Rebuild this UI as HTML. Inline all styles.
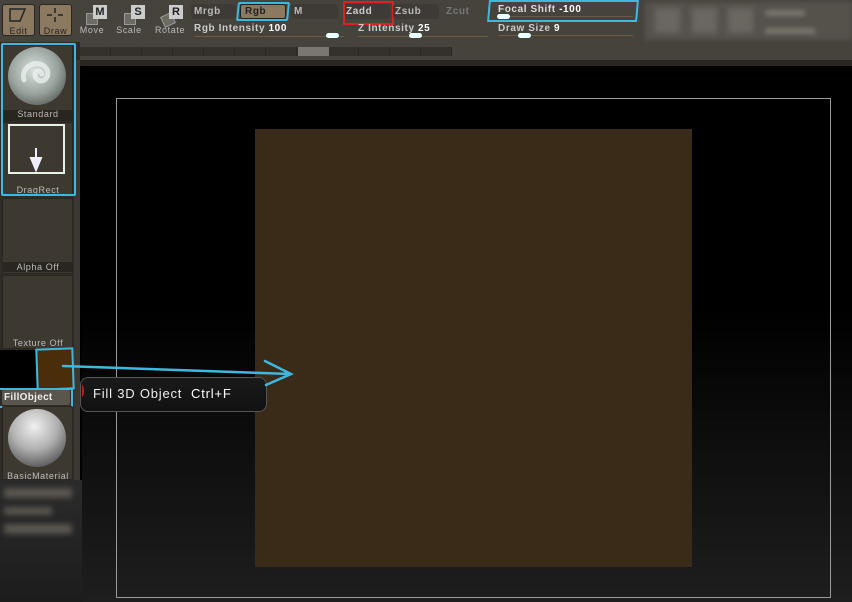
<!DOCTYPE html>
<html><head><style>
*{margin:0;padding:0;box-sizing:border-box}
body{width:852px;height:602px;overflow:hidden;background:#000;font-family:"Liberation Sans",sans-serif;position:relative}
.a{position:absolute}
.t{position:absolute;font-size:10px;color:#ddd;font-weight:bold;white-space:nowrap;letter-spacing:.6px}
.lb{position:absolute;font-size:9px;color:#bbb;text-align:center;white-space:nowrap;letter-spacing:.6px}
.slot{position:absolute;left:2px;width:71px;background:#3d3830;border:1px solid #2a2622;border-radius:2px}
</style></head><body>
<div class="a" style="left:0;top:0;width:852px;height:66px;background:#46423c"></div>
<div class="a" style="left:0;top:60px;width:852px;height:6px;background:#2b2824"></div>
<div class="a" style="left:645px;top:2px;width:207px;height:38px;background:#55524c;filter:blur(2px)"></div>
<div class="a" style="left:655px;top:8px;width:25px;height:25px;background:#6a6660;filter:blur(3px)"></div>
<div class="a" style="left:692px;top:8px;width:25px;height:25px;background:#6a6660;filter:blur(3px)"></div>
<div class="a" style="left:728px;top:8px;width:25px;height:25px;background:#6a6660;filter:blur(3px)"></div>
<div class="a" style="left:765px;top:10px;width:40px;height:6px;background:#77736c;filter:blur(2px)"></div>
<div class="a" style="left:765px;top:28px;width:50px;height:6px;background:#77736c;filter:blur(2px)"></div>
<div class="a" style="left:2px;top:4px;width:33px;height:32px;background:#8c7a60;border:1px solid #2a2622;border-radius:3px"></div>
<div class="a" style="left:39px;top:4px;width:33px;height:32px;background:#8c7a60;border:1px solid #2a2622;border-radius:3px"></div>
<svg class="a" style="left:8px;top:7px" width="20" height="16"><path d="M2 2 L17 2 L12 14 L2 14 Z" fill="none" stroke="#222" stroke-width="1.5"/></svg>
<svg class="a" style="left:45px;top:7px" width="20" height="16"><path d="M10 1V6M10 10V15M2 8H7M13 8H18" stroke="#222" stroke-width="1.5"/></svg>
<div class="lb" style="left:2px;top:26px;width:33px;color:#222;font-size:9px">Edit</div>
<div class="lb" style="left:39px;top:26px;width:33px;color:#222;font-size:9px">Draw</div>
<div class="a" style="left:86px;top:13px;width:12px;height:12px;background:#6e6a64;border:1px solid #999"></div>
<div class="a" style="left:93px;top:5px;width:14px;height:14px;background:#ccc;color:#222;font-size:11px;font-weight:bold;text-align:center;line-height:14px">M</div>
<div class="a" style="left:124px;top:13px;width:12px;height:12px;background:#6e6a64;border:1px solid #999"></div>
<div class="a" style="left:131px;top:5px;width:14px;height:14px;background:#ccc;color:#222;font-size:11px;font-weight:bold;text-align:center;line-height:14px">S</div>
<div class="a" style="left:162px;top:14px;width:12px;height:12px;background:#6e6a64;border:1px solid #999;transform:rotate(-25deg)"></div>
<div class="a" style="left:169px;top:5px;width:14px;height:14px;background:#ccc;color:#222;font-size:11px;font-weight:bold;text-align:center;line-height:14px">R</div>
<div class="lb" style="left:76px;top:25px;width:32px">Move</div>
<div class="lb" style="left:113px;top:25px;width:32px">Scale</div>
<div class="lb" style="left:151px;top:25px;width:38px">Rotate</div>
<div class="a" style="left:191px;top:4px;width:45px;height:15px;background:#3e3a35;border-radius:3px"></div>
<div class="t" style="left:194px;top:6px;color:#bbb">Mrgb</div>
<div class="a" style="left:240px;top:4px;width:46px;height:15px;background:#8c7a60;border-radius:3px;border:1px solid #222"></div>
<div class="t" style="left:245px;top:6px;color:#222">Rgb</div>
<div class="a" style="left:237px;top:2px;width:52px;height:19px;border:2px solid #3fb8e0;border-radius:2px;transform:skewX(-6deg)"></div>
<div class="a" style="left:291px;top:4px;width:47px;height:15px;background:#3e3a35;border-radius:3px"></div>
<div class="t" style="left:294px;top:6px;color:#bbb">M</div>
<div class="a" style="left:344px;top:4px;width:46px;height:15px;background:#3e3a35;border-radius:3px"></div>
<div class="t" style="left:346px;top:6px;color:#ccc">Zadd</div>
<div class="a" style="left:343px;top:1px;width:51px;height:24px;border:2px solid #e02020"></div>
<div class="a" style="left:393px;top:4px;width:46px;height:15px;background:#3e3a35;border-radius:3px"></div>
<div class="t" style="left:395px;top:6px;color:#bbb">Zsub</div>
<div class="t" style="left:446px;top:6px;color:#777">Zcut</div>
<div class="t" style="left:194px;top:23px;color:#ccc">Rgb Intensity <span style="color:#fff">100</span></div>
<div class="a" style="left:194px;top:36px;width:150px;height:1px;background:#6a5a40"></div>
<div class="a" style="left:326px;top:33px;width:13px;height:5px;background:#eaffff;border-radius:3px"></div>
<div class="t" style="left:358px;top:23px;color:#ccc">Z Intensity <span style="color:#fff">25</span></div>
<div class="a" style="left:358px;top:36px;width:130px;height:1px;background:#6a5a40"></div>
<div class="a" style="left:409px;top:33px;width:13px;height:5px;background:#eaffff;border-radius:3px"></div>
<div class="t" style="left:498px;top:4px;color:#ddd">Focal Shift <span style="color:#fff">-100</span></div>
<div class="a" style="left:498px;top:16px;width:135px;height:1px;background:#6a5a40"></div>
<div class="a" style="left:497px;top:14px;width:13px;height:5px;background:#eaffff;border-radius:3px"></div>
<div class="a" style="left:488px;top:0;width:150px;height:22px;border:2px solid #3fb8e0;transform:skewX(-5deg)"></div>
<div class="t" style="left:498px;top:23px;color:#ccc">Draw Size <span style="color:#fff">9</span></div>
<div class="a" style="left:498px;top:35px;width:135px;height:1px;background:#6a5a40"></div>
<div class="a" style="left:518px;top:33px;width:13px;height:5px;background:#eaffff;border-radius:3px"></div>
<div class="a" style="left:80px;top:47px;width:372px;height:9px;background:repeating-linear-gradient(90deg,#34312d 0 30px,#2a2724 30px 31px)"></div>
<div class="a" style="left:298px;top:47px;width:31px;height:9px;background:#7a7772"></div>
<div class="a" style="left:0;top:42px;width:80px;height:440px;background:#2f2c28"></div>
<div class="a" style="left:74px;top:60px;width:6px;height:420px;background:#3b3834"></div>
<div class="slot" style="top:45px;height:76px"></div>
<div class="a" style="left:8px;top:47px;width:58px;height:58px;border-radius:50%;background:radial-gradient(circle at 45% 40%,#d8e0dc,#9aa49f 50%,#5c625f 80%)"></div>
<svg class="a" style="left:14px;top:52px" width="46" height="44"><path d="M10 28 C6 14 24 6 32 16 C38 24 28 34 22 26 C18 20 26 16 28 22" fill="none" stroke="#e8efec" stroke-width="5" stroke-linecap="round" opacity=".8"/></svg>
<div class="a" style="left:3px;top:110px;width:70px;height:10px;background:#29251f"></div>
<div class="lb" style="left:2px;top:109px;width:72px">Standard</div>
<div class="slot" style="top:122px;height:74px"></div>
<div class="a" style="left:8px;top:124px;width:57px;height:50px;border:2px solid #e8f0e8"></div>
<svg class="a" style="left:29px;top:148px" width="14" height="24"><path d="M7 0V10M2 10H12L7 22Z" stroke="#eef" stroke-width="2" fill="#eef"/></svg>
<div class="lb" style="left:2px;top:185px;width:72px">DragRect</div>
<div class="a" style="left:1px;top:43px;width:75px;height:153px;border:2px solid #3fb8e0;border-radius:2px"></div>
<div class="slot" style="top:198px;height:76px"></div>
<div class="a" style="left:3px;top:262px;width:70px;height:10px;background:#29251f"></div>
<div class="lb" style="left:2px;top:262px;width:72px">Alpha Off</div>
<div class="slot" style="top:275px;height:74px"></div>
<div class="lb" style="left:2px;top:338px;width:72px">Texture Off</div>
<div class="a" style="left:0;top:350px;width:38px;height:40px;background:#000"></div>
<div class="a" style="left:36px;top:348px;width:38px;height:42px;background:#4a2e0c;border:2px solid #3fb8e0;transform:rotate(-2deg)"></div>
<div class="a" style="left:2px;top:390px;width:68px;height:15px;background:#5a554d;border-radius:2px"></div>
<div class="t" style="left:4px;top:392px;color:#eee;letter-spacing:.3px">FillObject</div>
<div class="a" style="left:0;top:388px;width:73px;height:20px;border:2px solid #3fb8e0;border-left:none"></div>
<div class="slot" style="top:406px;height:74px"></div>
<div class="a" style="left:8px;top:409px;width:58px;height:58px;border-radius:50%;background:radial-gradient(circle at 45% 30%,#f0f0f0,#b0b0b0 45%,#505050 85%)"></div>
<div class="lb" style="left:2px;top:471px;width:72px">BasicMaterial</div>
<div class="a" style="left:82px;top:66px;width:770px;height:536px;background:linear-gradient(#000 0%,#000 45%,#1e1e1e 100%)"></div>
<div class="a" style="left:0;top:480px;width:82px;height:122px;background:linear-gradient(#2b2b2b,#1c1c1c)"></div>
<div class="a" style="left:4px;top:488px;width:68px;height:10px;background:#5a5650;filter:blur(3px)"></div>
<div class="a" style="left:4px;top:507px;width:48px;height:8px;background:#5a5650;filter:blur(3px)"></div>
<div class="a" style="left:4px;top:524px;width:68px;height:10px;background:#5a5650;filter:blur(3px)"></div>
<div class="a" style="left:116px;top:98px;width:715px;height:500px;border:1px solid #9a9a9a"></div>
<div class="a" style="left:255px;top:129px;width:437px;height:438px;background:#3a2a18"></div>
<div class="a" style="left:80px;top:377px;width:187px;height:35px;background:linear-gradient(#1a1a1a,#111);border:1px solid #555;border-radius:8px"></div>
<div class="a" style="left:80px;top:385px;width:4px;height:12px;border-right:2px solid #c02020;border-radius:50%"></div>
<div class="a" style="left:93px;top:386px;font-size:13px;color:#eee;white-space:nowrap;letter-spacing:.8px">Fill 3D Object &nbsp;<span style="color:#fff">Ctrl+F</span></div>
<svg class="a" style="left:55px;top:355px" width="245" height="35"><path d="M8 11 L236 19 M210 6 L236 19 L211 30" fill="none" stroke="#3fb8e0" stroke-width="2.5" stroke-linecap="round"/></svg>
</body></html>
